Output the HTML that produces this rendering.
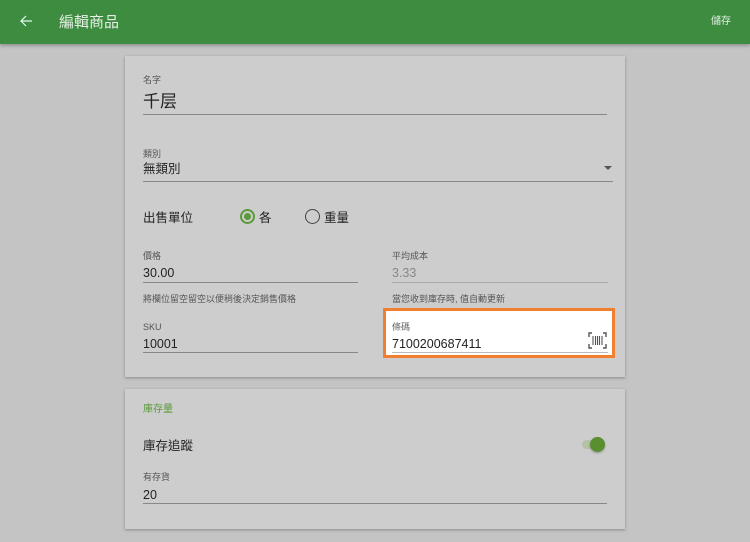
<!DOCTYPE html>
<html><head><meta charset="utf-8"><style>
*{margin:0;padding:0;box-sizing:border-box}
body{width:750px;height:542px;background:#c4c4c4;font-family:"Liberation Sans","Noto Sans CJK TC",sans-serif;position:relative;overflow:hidden;color:#222;line-height:1}
.a{position:absolute}
.t{transform:translateY(3px)}
.val.t{transform:translateY(1px)}
.hdr{left:0;top:0;width:750px;height:44px;background:#3d8c40;box-shadow:0 2px 3px rgba(0,0,0,.25)}
.card{background:#cdcdcd;box-shadow:0 1px 3px rgba(0,0,0,.3)}
.lbl{font-size:9px;color:#555}
.val{font-size:12.5px;color:#222}
.line{height:1px;background:#888}
.hint{font-size:9px;color:#555}
</style></head><body>
<div class="a hdr"></div>
<svg class="a" style="left:19px;top:14px" width="14" height="14" viewBox="0 0 14 14"><path d="M13 7H2M7 2L2 7l5 5" stroke="#dfe" stroke-width="1.2" fill="none"/></svg>
<div class="a" style="left:59px;top:15px;font-size:15px;color:#e4efe4">編輯商品</div>
<div class="a" style="left:711px;top:17px;font-size:10px;color:#e4efe4">儲存</div>

<div class="a card" style="left:125px;top:56px;width:500px;height:321px"></div>
<div class="a lbl t" style="left:143px;top:73px">名字</div>
<div class="a" style="left:143px;top:93px;font-size:17px">千层</div>
<div class="a line" style="left:143px;top:114px;width:464px"></div>
<div class="a lbl t" style="left:143px;top:147px">類別</div>
<div class="a val t" style="left:143px;top:162px">無類別</div>
<svg class="a" style="left:604px;top:166px" width="8" height="5"><path d="M0 0h8L4 4z" fill="#555"/></svg>
<div class="a line" style="left:143px;top:181px;width:470px"></div>
<div class="a t" style="left:143px;top:209px;font-size:12.5px">出售單位</div>
<div class="a" style="left:240px;top:209px;width:15px;height:15px;border:2px solid #5a9a3a;border-radius:50%"></div>
<div class="a" style="left:244px;top:213px;width:7px;height:7px;background:#5a9a3a;border-radius:50%"></div>
<div class="a t" style="left:259px;top:209px;font-size:12.5px">各</div>
<div class="a" style="left:305px;top:209px;width:15px;height:15px;border:1.5px solid #444;border-radius:50%"></div>
<div class="a t" style="left:324px;top:209px;font-size:12.5px">重量</div>

<div class="a lbl t" style="left:143px;top:249px">價格</div>
<div class="a val t" style="left:143px;top:266px">30.00</div>
<div class="a line" style="left:143px;top:282px;width:215px"></div>
<div class="a hint t" style="left:143px;top:292px">將欄位留空留空以便稍後決定銷售價格</div>
<div class="a lbl t" style="left:143px;top:320px">SKU</div>
<div class="a val t" style="left:143px;top:337px">10001</div>
<div class="a line" style="left:143px;top:352px;width:215px"></div>

<div class="a lbl t" style="left:392px;top:249px">平均成本</div>
<div class="a val t" style="left:392px;top:266px;color:#888">3.33</div>
<div class="a line" style="left:392px;top:282px;width:216px;background:#aaa"></div>
<div class="a hint t" style="left:392px;top:292px">當您收到庫存時, 值自動更新</div>
<div class="a" style="left:383px;top:308px;width:232px;height:50px;background:#fff;border:3px solid #f08030"></div>
<div class="a lbl t" style="left:392px;top:320px;color:#666">條碼</div>
<div class="a val t" style="left:392px;top:337px">7100200687411</div>
<div class="a line" style="left:392px;top:352px;width:216px;background:#bbb"></div>
<svg class="a" style="left:588px;top:332px" width="19" height="17" viewBox="0 0 19 17"><path d="M1 5V1h3M15 1h3v4M18 12v4h-3M4 16H1v-4" stroke="#555" stroke-width="1.4" fill="none"/><path d="M5 4v9M7.5 4v9M9.5 4v9M11.5 4v9M14 4v9" stroke="#555" stroke-width="1.1"/></svg>

<div class="a card" style="left:125px;top:389px;width:500px;height:140px"></div>
<div class="a t" style="left:143px;top:402px;font-size:10px;color:#5a9a3a">庫存量</div>
<div class="a t" style="left:143px;top:437px;font-size:12.5px">庫存追蹤</div>
<div class="a" style="left:582px;top:440px;width:20px;height:9px;background:#b5c0a8;border-radius:5px"></div>
<div class="a" style="left:590px;top:437px;width:15px;height:15px;background:#5a8f30;border-radius:50%;box-shadow:0 1px 2px rgba(0,0,0,.3)"></div>
<div class="a lbl t" style="left:143px;top:470px">有存貨</div>
<div class="a val t" style="left:143px;top:488px">20</div>
<div class="a line" style="left:143px;top:503px;width:464px"></div>
</body></html>
